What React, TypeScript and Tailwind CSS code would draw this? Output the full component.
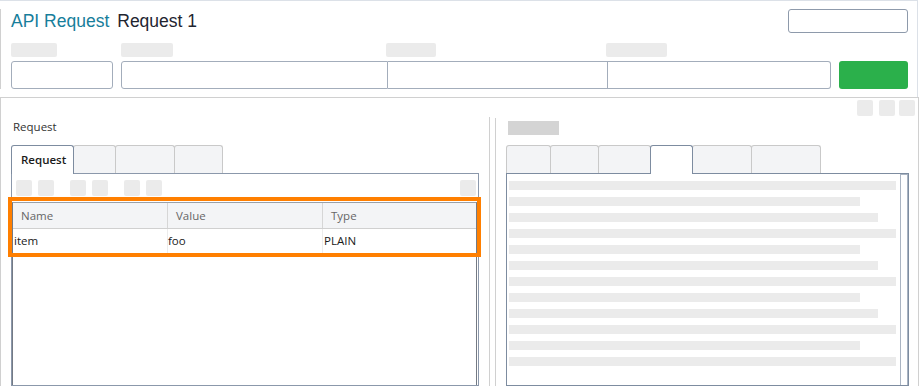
import React from "react";

// ── Small building blocks ─────────────────────────────────────────────────────

function Ph({ className = "" }: { className?: string }) {
  // grey placeholder block (icons / labels that are blanked in the UI)
  return <div className={`rounded-[2px] bg-[#ebebeb] ${className}`} />;
}

type TabSpec = { w: string; label?: string; active?: boolean };

function Tabs({ tabs }: { tabs: TabSpec[] }) {
  return (
    <div className="flex h-[28px] items-end">
      {tabs.map((t, i) => (
        <div
          key={i}
          className={
            t.active
              ? `relative z-10 -mb-px flex h-[29px] items-center rounded-t-[3px] border-x border-t border-[#7d8ca0] bg-white px-[9px] ${t.w} ${i > 0 ? "-ml-px" : ""}`
              : `flex h-[28px] rounded-t-[3px] border-x border-t border-[#c9c9c9] bg-[#f3f4f6] ${t.w} ${i > 0 ? "-ml-px" : ""}`
          }
        >
          {t.label && (
            <span className="text-[11.5px] font-semibold text-[#1a1a1a]">{t.label}</span>
          )}
        </div>
      ))}
    </div>
  );
}

// skeleton line widths for the response panel
const LINES = [
  "w-[387px]",
  "w-[351px]",
  "w-[369px]",
  "w-[387px]",
  "w-[351px]",
  "w-[369px]",
  "w-[387px]",
  "w-[351px]",
  "w-[369px]",
  "w-[387px]",
  "w-[351px]",
  "w-[387px]",
];

// ── Page ──────────────────────────────────────────────────────────────────────

export default function App() {
  return (
    <div className="relative flex h-[386px] w-[919px] flex-col overflow-hidden bg-white font-['Open_Sans',sans-serif] text-[#222]">
      {/* Header */}
      <div className="h-[97px] w-[918px] shrink-0 border-r border-t border-[#dce1e8]">
        <div className="mt-[8px] h-[80px] border-l border-[#d0d0d0] pl-[10px] pr-[9px]">
          <div className="flex h-[24px] items-center justify-between">
            <div className="flex font-['Liberation_Sans',Arial,sans-serif] text-[17.5px] leading-[20px]">
              <span className="text-[#177e9b]">API Request</span>
              <span className="ml-[8px] text-[#1f2530]">Request 1</span>
            </div>
            <div className="h-[24px] w-[120px] rounded-[3px] border border-[#8e9aab]" />
          </div>

          <div className="mt-[10px] flex">
            <div className="flex w-[102px] flex-col">
              <Ph className="h-[14px] w-[46px]" />
              <div className="mt-[4px] h-[28px] rounded-[3px] border border-[#a3adbb]" />
            </div>
            <div className="ml-[8px] flex w-[267px] flex-col">
              <Ph className="h-[14px] w-[52px]" />
              <div className="mt-[4px] h-[28px] rounded-l-[3px] border border-[#a3adbb]" />
            </div>
            <div className="flex w-[220px] flex-col">
              <Ph className="-ml-[2px] h-[14px] w-[50px]" />
              <div className="mt-[4px] h-[28px] border-y border-r border-[#a3adbb]" />
            </div>
            <div className="flex w-[223px] flex-col">
              <Ph className="-ml-[2px] h-[14px] w-[61px]" />
              <div className="mt-[4px] h-[28px] rounded-r-[3px] border-y border-r border-[#a3adbb]" />
            </div>
            <div className="ml-[8px] flex w-[69px] flex-col justify-end">
              <div className="h-[28px] rounded-[3px] bg-[#2bb04b]" />
            </div>
          </div>
        </div>
      </div>

      {/* Body */}
      <div className="flex min-h-0 flex-1 border-x border-t border-[#d0d0d0]">
        {/* Request side */}
        <div className="flex w-[488px] flex-col pl-[10px] pr-[10px] pt-[21px]">
          <div className="pl-[2px] text-[11.5px] leading-[16px] text-[#333]">Request</div>
          <div className="mt-[10px]">
            <Tabs
              tabs={[
                { w: "w-[63px]", label: "Request", active: true },
                { w: "w-[43px]" },
                { w: "w-[60px]" },
                { w: "w-[49px]" },
              ]}
            />
          </div>
          <div className="flex flex-1 flex-col border border-[#8b98ab]">
            <div className="flex h-[22px] items-end pl-[4px] pr-[2px]">
              <Ph className="h-[16px] w-[16px]" />
              <Ph className="ml-[6px] h-[16px] w-[16px]" />
              <Ph className="ml-[16px] h-[16px] w-[16px]" />
              <Ph className="ml-[6px] h-[16px] w-[16px]" />
              <Ph className="ml-[16px] h-[16px] w-[16px]" />
              <Ph className="ml-[6px] h-[16px] w-[16px]" />
              <Ph className="ml-auto h-[16px] w-[16px]" />
            </div>
            <div className="mr-px mt-[6px] flex-1 border-x border-t border-x-[#747a84] border-t-[#9aa0a8] text-[11.5px]">
              <div className="grid h-[26px] grid-cols-[155px_155px_1fr] border-b border-[#d0d0d0] bg-[#f3f4f6] text-[#666]">
                <div className="flex items-center border-r border-[#d6d6d6] pl-[8px]">Name</div>
                <div className="flex items-center border-r border-[#d6d6d6] pl-[8px]">Value</div>
                <div className="flex items-center pl-[8px]">Type</div>
              </div>
              <div className="grid h-[25px] grid-cols-[155px_155px_1fr] border-b border-[#e8e8e8] text-[#1a1a1a]">
                <div className="flex items-center border-r border-[#ececec] pl-[1px]">item</div>
                <div className="flex items-center border-r border-[#ececec]">foo</div>
                <div className="flex items-center pl-[1px]">PLAIN</div>
              </div>
            </div>
          </div>
        </div>

        {/* splitter */}
        <div className="mt-[19px] w-px bg-[#d0d0d0]" />
        <div className="ml-[5px] mt-[20px] w-px bg-[#d0d0d0]" />

        {/* Response side */}
        <div className="flex flex-1 flex-col pl-[10px] pr-[3px] pt-[2px]">
          <div className="flex justify-end gap-[6px]">
            <Ph className="h-[16px] w-[16px]" />
            <Ph className="h-[16px] w-[16px]" />
            <Ph className="-ml-[2px] h-[16px] w-[16px]" />
          </div>
          <div className="mt-[5px] ml-[2px] h-[14px] w-[51px] bg-[#d4d4d4]" />
          <div className="mt-[10px]">
            <Tabs
              tabs={[
                { w: "w-[45px]" },
                { w: "w-[49px]" },
                { w: "w-[53px]" },
                { w: "w-[43px]", active: true },
                { w: "w-[60px]" },
                { w: "w-[70px]" },
              ]}
            />
          </div>
          <div className="mr-[6px] flex flex-1 border border-[#7d8ca0]">
            <div className="flex flex-1 flex-col gap-[7px] pl-[2px] pt-[7px]">
              {LINES.map((w, i) => (
                <div key={i} className={`h-[9px] shrink-0 bg-[#ebebeb] ${w}`} />
              ))}
            </div>
            <div className="w-[8px] border-x border-t border-[#aab4c2]" />
          </div>
        </div>
      </div>

      {/* highlighted row outline */}
      <div className="pointer-events-none absolute left-[8px] top-[197px] h-[60px] w-[473px] border-[4px] border-[#ff7f00]" />
    </div>
  );
}
